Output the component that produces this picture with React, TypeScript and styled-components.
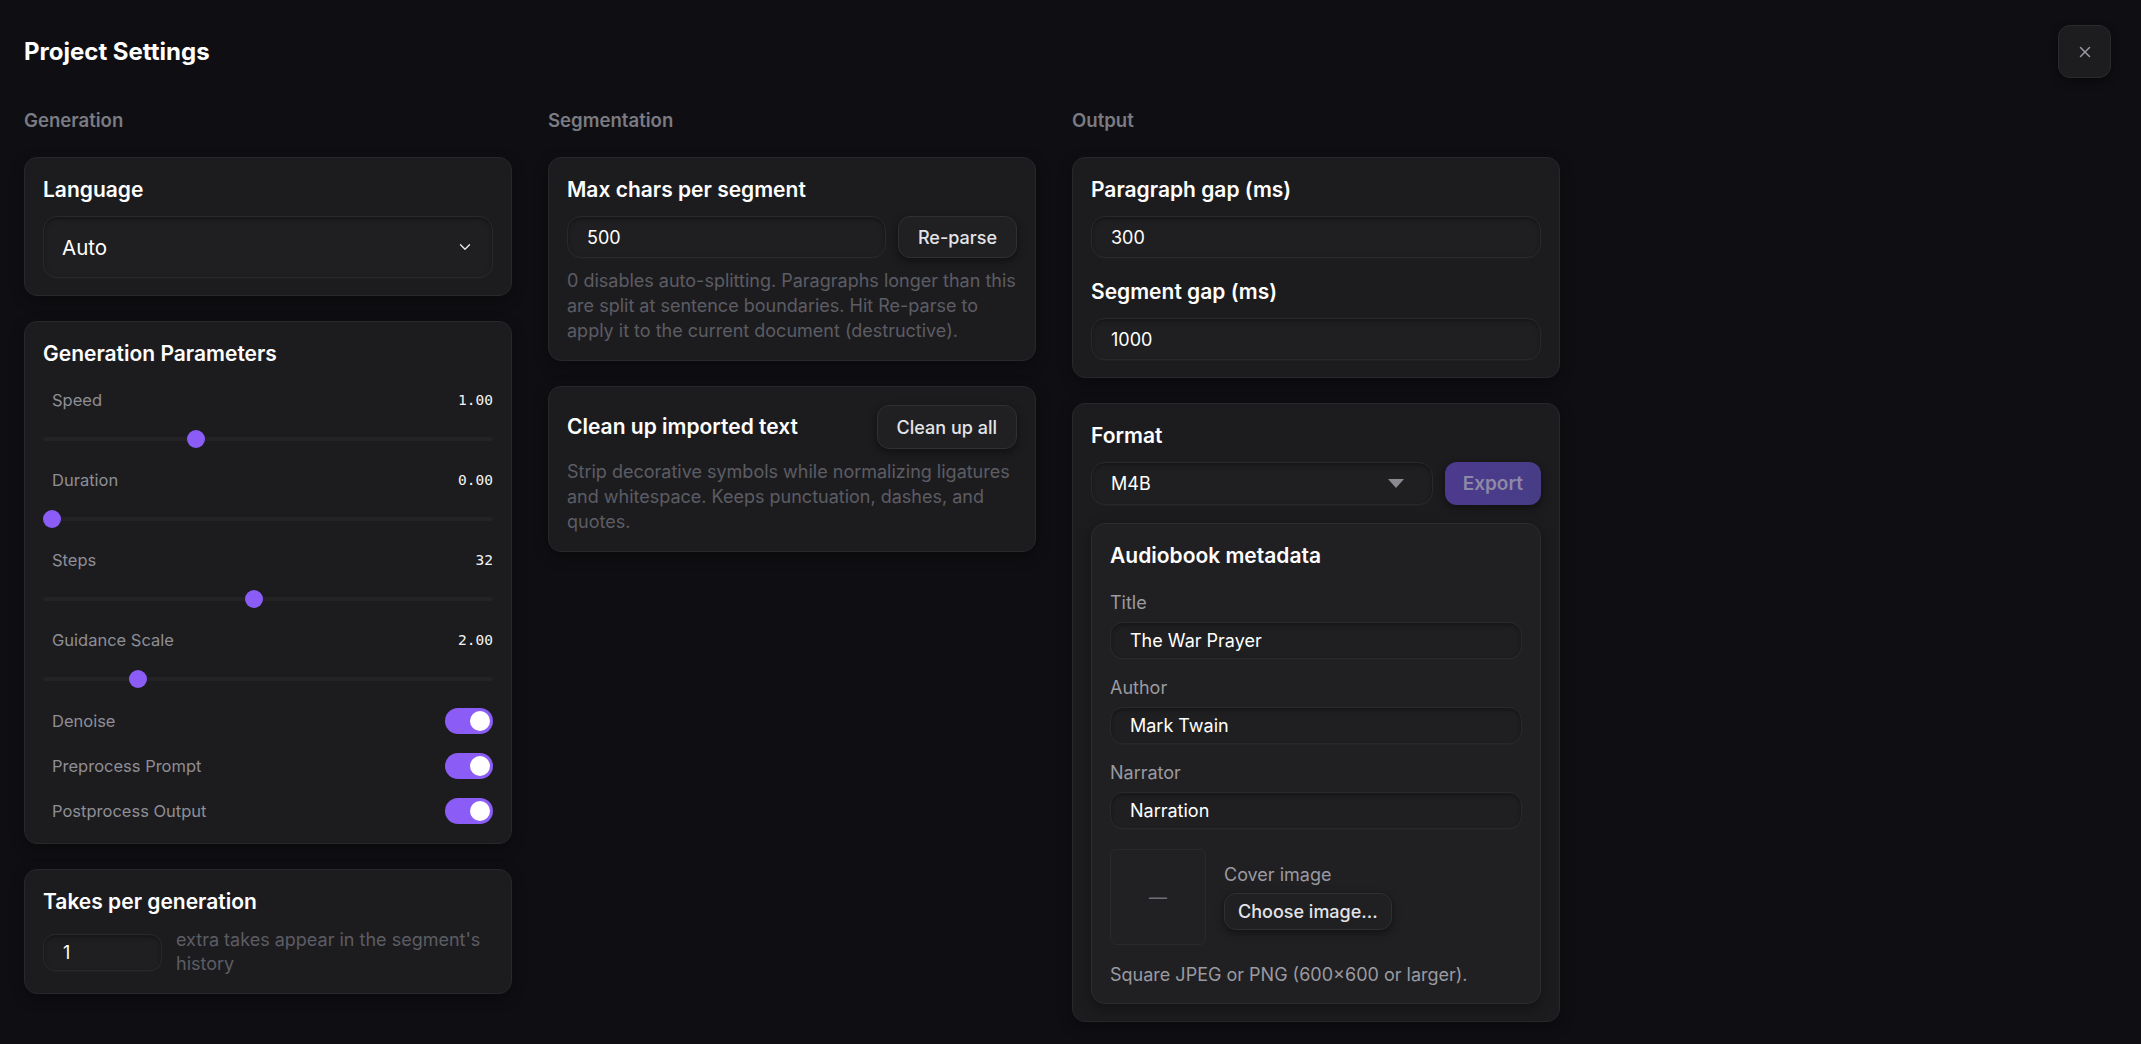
import styled, { createGlobalStyle } from 'styled-components';
import { ChevronDown, X } from 'lucide-react';

const GlobalStyle = createGlobalStyle`
  html, body {
    margin: 0;
    padding: 0;
    background: #0f0f13;
    color: #f2f2f4;
    font-family: Inter, "Noto Sans", "Liberation Sans", sans-serif;
  }
  * {
    box-sizing: border-box;
  }
`;

const Page = styled.div`
  min-height: 1044px;
  padding: 25px 30px 0 24px;
  background: #0f0f13;
`;

const Header = styled.header`
  display: flex;
  align-items: center;
  justify-content: space-between;
  height: 53px;
`;

const Title = styled.h1`
  margin: 0;
  font-size: 24px;
  line-height: 32px;
  font-weight: 700;
  color: #ffffff;
`;

const CloseButton = styled.button`
  width: 53px;
  height: 53px;
  display: flex;
  align-items: center;
  justify-content: center;
  border-radius: 12px;
  border: 1px solid #2b2b2f;
  background: #1d1d20;
  color: #9a9aa2;
  box-shadow: 0 3px 10px rgba(0, 0, 0, 0.45);
  padding: 0;
`;

const Grid = styled.div`
  display: grid;
  grid-template-columns: repeat(3, 488px);
  column-gap: 36px;
  margin-top: 30px;
  align-items: start;
`;

const Column = styled.section`
  display: flex;
  flex-direction: column;
  gap: 25px;
`;

const SectionLabel = styled.h2`
  margin: 0;
  font-size: 18.6px;
  line-height: 24px;
  font-weight: 600;
  color: #7b7b83;
`;

const Card = styled.div<{ $inner?: boolean }>`
  display: flex;
  flex-direction: column;
  padding: 18px 18px 17px;
  border-radius: ${({ $inner }) => ($inner ? '14px' : '13px')};
  border: 1px solid ${({ $inner }) => ($inner ? '#2c2c30' : '#28282c')};
  background: ${({ $inner }) => ($inner ? '#202023' : '#1c1c1f')};
  box-shadow: 0 4px 14px rgba(0, 0, 0, 0.35);
`;

const CardTitle = styled.h3<{ $gap?: number }>`
  margin: 0 0 ${({ $gap }) => ($gap ?? 12)}px;
  font-size: 21px;
  line-height: 28px;
  font-weight: 600;
  color: #ffffff;
`;

const TitleRow = styled.div`
  display: flex;
  align-items: center;
  justify-content: space-between;
  height: 44px;
  margin-bottom: 10px;

  ${CardTitle} {
    margin: 0;
  }
`;

const Field = styled.div<{ $height: number; $radius?: number; $width?: number }>`
  display: flex;
  align-items: center;
  justify-content: space-between;
  flex-shrink: 0;
  height: ${({ $height }) => $height}px;
  width: ${({ $width }) => ($width ? `${$width}px` : '100%')};
  padding: 0 19px;
  border-radius: ${({ $radius }) => $radius ?? 14}px;
  border: 1px solid #29292d;
  background: #1f1f22;
  box-shadow: inset 0 2px 4px rgba(0, 0, 0, 0.35), 0 1px 0 rgba(255, 255, 255, 0.02);
  font-size: 18px;
  color: #ffffff;
`;

const LanguageSelect = styled(Field)`
  font-size: 20.5px;
  padding: 0 18px;
`;

const InputRow = styled.div`
  display: flex;
  align-items: center;
  gap: 12px;

  & > ${Field} {
    flex: 1;
    min-width: 0;
  }
`;

const Button = styled.button<{ $height?: number; $pad?: number }>`
  height: ${({ $height }) => $height ?? 44}px;
  flex: none;
  padding: 0 ${({ $pad }) => $pad ?? 19}px;
  border-radius: 12px;
  border: 1px solid #2f2f34;
  background: #202023;
  color: #e4e4e8;
  font-family: inherit;
  font-size: 18px;
  font-weight: 500;
  box-shadow: 0 3px 8px rgba(0, 0, 0, 0.45);
`;

const ExportButton = styled(Button)`
  height: 43px;
  padding: 0 18px;
  border: none;
  background: linear-gradient(90deg, #4d3a8e, #463d86);
  color: #8d88a6;
  font-weight: 600;
  font-size: 19px;
`;

const Help = styled.p`
  margin: 10px 0 0;
  font-size: 18px;
  line-height: 25px;
  color: #5c5c64;
`;

const ParamList = styled.div`
  display: flex;
  flex-direction: column;
  gap: 12px;
  margin-top: 9px;
`;

const Param = styled.div`
  display: flex;
  flex-direction: column;
`;

const ParamHead = styled.div`
  display: flex;
  align-items: center;
  justify-content: space-between;
  height: 22px;
  padding-left: 9px;
`;

const ParamLabel = styled.span`
  font-size: 16.5px;
  color: #8e8e96;
`;

const ParamValue = styled.span`
  font-family: "DejaVu Sans Mono", "Liberation Mono", monospace;
  font-size: 14.5px;
  color: #f4f4f6;
`;

const SliderBox = styled.div`
  position: relative;
  height: 36px;
  margin-top: 10px;
  display: flex;
  align-items: center;
`;

const Track = styled.div`
  width: 100%;
  height: 4px;
  border-radius: 2px;
  background: #232326;
`;

const Thumb = styled.span`
  position: absolute;
  top: 50%;
  width: 18px;
  height: 18px;
  margin: -9px 0 0 -9px;
  border-radius: 50%;
  background: #8b5cf6;
`;

const ToggleList = styled.div`
  display: flex;
  flex-direction: column;
  gap: 15px;
  margin-top: 9px;
`;

const ToggleRow = styled.div`
  display: flex;
  align-items: center;
  justify-content: space-between;
  height: 30px;
  padding-left: 9px;
`;

const Switch = styled.span<{ $on: boolean }>`
  display: flex;
  align-items: center;
  justify-content: ${({ $on }) => ($on ? 'flex-end' : 'flex-start')};
  width: 48px;
  height: 26px;
  padding: 3px;
  border-radius: 13px;
  background: ${({ $on }) => ($on ? '#8b5cf6' : '#3a3a40')};

  &::after {
    content: '';
    width: 20px;
    height: 20px;
    border-radius: 50%;
    background: #ffffff;
  }
`;

const TakesRow = styled.div`
  display: flex;
  align-items: center;
  gap: 14px;
`;

const TakesHelp = styled(Help)`
  margin: 0;
  line-height: 24px;
`;

const Caret = styled.span`
  width: 0;
  height: 0;
  border-left: 8px solid transparent;
  border-right: 8px solid transparent;
  border-top: 9px solid #8a8a90;
  margin-right: 9px;
`;

const MetaLabel = styled.div`
  font-size: 18px;
  line-height: 22px;
  color: #9a9aa0;
  margin-bottom: 8px;
`;

const MetaFields = styled.div`
  display: flex;
  flex-direction: column;
  gap: 18px;
`;

const CoverRow = styled.div`
  display: flex;
  align-items: center;
  gap: 18px;
  margin-top: 20px;
`;

const CoverBox = styled.div`
  width: 96px;
  height: 96px;
  flex: none;
  display: flex;
  align-items: center;
  justify-content: center;
  border-radius: 6px;
  border: 1px solid #29292d;
  background: #212124;
  color: #6f6f77;
  font-size: 18px;
`;

const CoverInfo = styled.div`
  display: flex;
  flex-direction: column;
  align-items: flex-start;

  ${MetaLabel} {
    margin-bottom: 7px;
  }
`;

const Note = styled.div`
  margin-top: 19px;
  font-size: 18px;
  line-height: 22px;
  color: #9a9aa0;
`;

const params = [
  { label: 'Speed', value: '1.00', pos: 0.333 },
  { label: 'Duration', value: '0.00', pos: 0 },
  { label: 'Steps', value: '32', pos: 0.467 },
  { label: 'Guidance Scale', value: '2.00', pos: 0.2 },
];

const toggles = ['Denoise', 'Preprocess Prompt', 'Postprocess Output'];

const meta = [
  { label: 'Title', value: 'The War Prayer' },
  { label: 'Author', value: 'Mark Twain' },
  { label: 'Narrator', value: 'Narration' },
];

export default function App() {
  return (
    <Page>
      <GlobalStyle />
      <Header>
        <Title>Project Settings</Title>
        <CloseButton aria-label="Close">
          <X size={18} strokeWidth={2} />
        </CloseButton>
      </Header>

      <Grid>
        <Column>
          <SectionLabel>Generation</SectionLabel>
          <Card>
            <CardTitle>Language</CardTitle>
            <LanguageSelect $height={62}>
              <span>Auto</span>
              <ChevronDown size={18} strokeWidth={1.8} color="#e8e8ec" />
            </LanguageSelect>
          </Card>

          <Card>
            <CardTitle>Generation Parameters</CardTitle>
            <ParamList>
              {params.map((p) => (
                <Param key={p.label}>
                  <ParamHead>
                    <ParamLabel>{p.label}</ParamLabel>
                    <ParamValue>{p.value}</ParamValue>
                  </ParamHead>
                  <SliderBox>
                    <Track />
                    <Thumb style={{ left: `calc(9px + ${p.pos} * (100% - 18px))` }} />
                  </SliderBox>
                </Param>
              ))}
            </ParamList>
            <ToggleList>
              {toggles.map((t) => (
                <ToggleRow key={t}>
                  <ParamLabel>{t}</ParamLabel>
                  <Switch $on />
                </ToggleRow>
              ))}
            </ToggleList>
          </Card>

          <Card>
            <CardTitle>Takes per generation</CardTitle>
            <TakesRow>
              <Field $height={37} $width={119} $radius={12}>
                1
              </Field>
              <TakesHelp>extra takes appear in the segment's history</TakesHelp>
            </TakesRow>
          </Card>
        </Column>

        <Column>
          <SectionLabel>Segmentation</SectionLabel>
          <Card>
            <CardTitle>Max chars per segment</CardTitle>
            <InputRow>
              <Field $height={42}>500</Field>
              <Button $height={42}>Re-parse</Button>
            </InputRow>
            <Help>
              0 disables auto-splitting. Paragraphs longer than this are split at sentence
              boundaries. Hit Re-parse to apply it to the current document (destructive).
            </Help>
          </Card>

          <Card>
            <TitleRow>
              <CardTitle>Clean up imported text</CardTitle>
              <Button>Clean up all</Button>
            </TitleRow>
            <Help style={{ marginTop: 0 }}>
              Strip decorative symbols while normalizing ligatures and whitespace. Keeps
              punctuation, dashes, and quotes.
            </Help>
          </Card>
        </Column>

        <Column>
          <SectionLabel>Output</SectionLabel>
          <Card>
            <CardTitle>Paragraph gap (ms)</CardTitle>
            <Field $height={42}>300</Field>
            <CardTitle style={{ marginTop: 20 }}>Segment gap (ms)</CardTitle>
            <Field $height={42}>1000</Field>
          </Card>

          <Card>
            <CardTitle>Format</CardTitle>
            <InputRow>
              <Field $height={43}>
                <span>M4B</span>
                <Caret />
              </Field>
              <ExportButton>Export</ExportButton>
            </InputRow>
            <Card $inner style={{ marginTop: 18 }}>
              <CardTitle $gap={22}>Audiobook metadata</CardTitle>
              <MetaFields>
                {meta.map((m) => (
                  <div key={m.label}>
                    <MetaLabel>{m.label}</MetaLabel>
                    <Field $height={37} $radius={13}>
                      {m.value}
                    </Field>
                  </div>
                ))}
              </MetaFields>
              <CoverRow>
                <CoverBox>—</CoverBox>
                <CoverInfo>
                  <MetaLabel>Cover image</MetaLabel>
                  <Button $height={37} $pad={13}>Choose image...</Button>
                </CoverInfo>
              </CoverRow>
              <Note>Square JPEG or PNG (600×600 or larger).</Note>
            </Card>
          </Card>
        </Column>
      </Grid>
    </Page>
  );
}
